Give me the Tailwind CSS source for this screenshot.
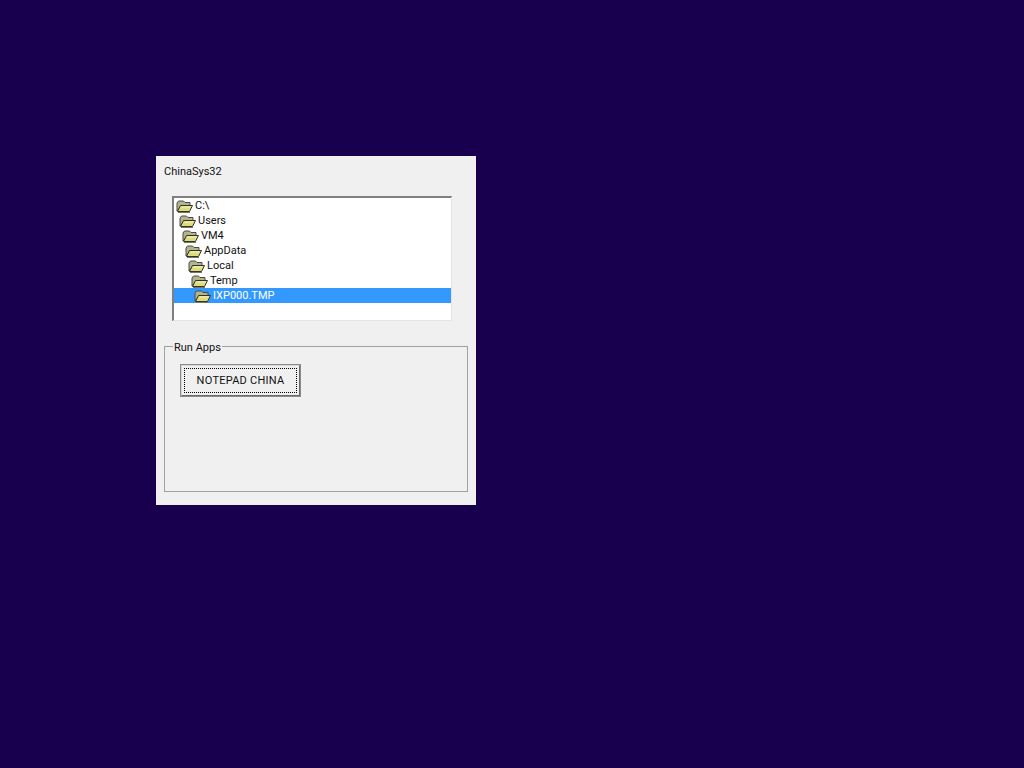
<!DOCTYPE html>
<html lang="en">
<head>
  <meta charset="UTF-8">
  <title>ChinaSys32</title>
  <script src="https://cdn.jsdelivr.net/npm/@tailwindcss/browser@4"></script>
</head>
<body class="bg-[#19004f] h-[768px] overflow-hidden font-['Roboto',sans-serif] text-[11px] text-[#111]">
  <!-- Folder icon used by the tree rows -->
  <svg class="hidden">
    <symbol id="folder" viewBox="0 0 17 14">
      <path d="M1 12V4L2.5 2H7.5L9 3.5h5V7H5L1 12Z" fill="#b4b48c" stroke="#4a4a4a"/>
      <path d="M1.5 12.5 4.5 6.5H16.5L13.5 12.5Z" fill="#dcdc7c" stroke="#333"/>
      <path d="M5.5 8H14.5" stroke="#f6f6c0"/>
      <path d="M2 13.5H14" stroke="#77775a"/>
    </symbol>
  </svg>

  <!-- Dialog -->
  <div class="absolute left-[156px] top-[156px] w-[320px] h-[349px] bg-[#f0f0f0] flex flex-col">
    <div class="h-[14px] mt-[8px] ml-[8px] leading-[15px]">ChinaSys32</div>

    <!-- Folder tree -->
    <div class="mt-[18px] ml-[16px] w-[280px] h-[125px] bg-white border-2 border-t-[#7f7f7f] border-l-[#7f7f7f] border-r border-b border-r-[#e4e4e4] border-b-[#e4e4e4]">
      <div class="flex items-center h-[15px] pl-[2px] gap-[2px]"><svg width="17" height="14"><use href="#folder"/></svg><span class="pt-[2px]">C:\</span></div>
      <div class="flex items-center h-[15px] pl-[5px] gap-[2px]"><svg width="17" height="14"><use href="#folder"/></svg><span class="pt-[2px]">Users</span></div>
      <div class="flex items-center h-[15px] pl-[8px] gap-[2px]"><svg width="17" height="14"><use href="#folder"/></svg><span class="pt-[2px]">VM4</span></div>
      <div class="flex items-center h-[15px] pl-[11px] gap-[2px]"><svg width="17" height="14"><use href="#folder"/></svg><span class="pt-[2px]">AppData</span></div>
      <div class="flex items-center h-[15px] pl-[14px] gap-[2px]"><svg width="17" height="14"><use href="#folder"/></svg><span class="pt-[2px]">Local</span></div>
      <div class="flex items-center h-[15px] pl-[17px] gap-[2px]"><svg width="17" height="14"><use href="#folder"/></svg><span class="pt-[2px]">Temp</span></div>
      <div class="flex items-center h-[15px] pl-[20px] gap-[2px] bg-[#3399ff] text-white"><svg width="17" height="14"><use href="#folder"/></svg><span class="pt-[2px]">IXP000.TMP</span></div>
    </div>

    <!-- Run Apps group -->
    <fieldset class="mt-[18px] ml-[8px] w-[304px] h-[153px] border border-[#a0a0a0] pl-[15px] pr-0 pb-0 pt-[11px]">
      <legend class="-ml-[7px] px-[1px] leading-[14px] relative top-[2px]">Run Apps</legend>
      <button class="w-[121px] h-[33px] bg-[#f0f0f0] border-2 border-t-[#d8d8d8] border-l-[#d8d8d8] border-r-[#696969] border-b-[#696969] outline outline-1 -outline-offset-1 outline-[#8a8a8a] p-[2px]">
        <span class="flex items-center justify-center h-full border border-dotted border-black pt-[2px] tracking-[0.25px]">NOTEPAD CHINA</span>
      </button>
    </fieldset>
  </div>
</body>
</html>
